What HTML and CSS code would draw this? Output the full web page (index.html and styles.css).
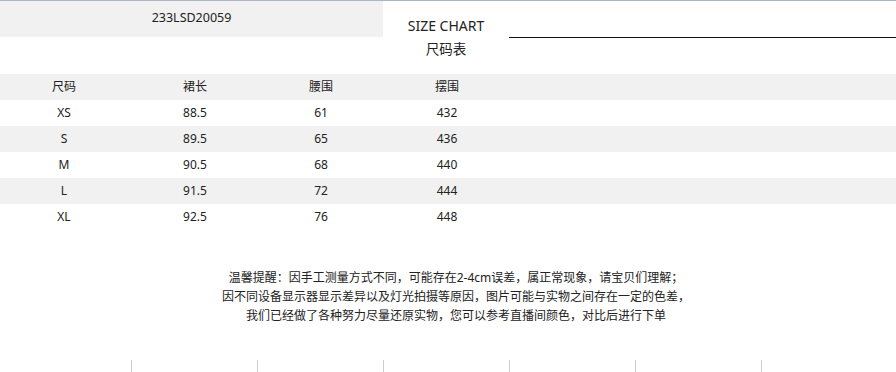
FILE: index.html
```html
<!DOCTYPE html>
<html lang="zh-CN">
<head>
<meta charset="utf-8">
<title>SIZE CHART 尺码表</title>
<link rel="stylesheet" href="styles.css">
</head>
<body>
<div class="top-rule"></div>
<header class="title-bar">
  <div class="code">233LSD20059</div>
  <div class="title">
    <div class="title-en">SIZE CHART</div>
    <div class="title-cn">尺码表</div>
  </div>
  <div class="rule"></div>
</header>
<section class="chart">
  <div class="row stripe"><span>尺码</span><span>裙长</span><span>腰围</span><span>摆围</span></div>
  <div class="row"><span>XS</span><span>88.5</span><span>61</span><span>432</span></div>
  <div class="row stripe"><span>S</span><span>89.5</span><span>65</span><span>436</span></div>
  <div class="row"><span>M</span><span>90.5</span><span>68</span><span>440</span></div>
  <div class="row stripe"><span>L</span><span>91.5</span><span>72</span><span>444</span></div>
  <div class="row"><span>XL</span><span>92.5</span><span>76</span><span>448</span></div>
</section>
<section class="notes">
  <p>温馨提醒：因手工测量方式不同，可能存在2-4cm误差，属正常现象，请宝贝们理解；</p>
  <p>因不同设备显示器显示差异以及灯光拍摄等原因，图片可能与实物之间存在一定的色差，</p>
  <p>我们已经做了各种努力尽量还原实物，您可以参考直播间颜色，对比后进行下单</p>
</section>
<div class="ticks"><i></i><i></i><i></i><i></i><i></i><i></i></div>
</body>
</html>
```
FILE: styles.css
```css
html, body {
  margin: 0;
  padding: 0;
  background: #ffffff;
}
body {
  width: 896px;
  height: 372px;
  overflow: hidden;
  font-family: "Noto Sans", "Noto Sans CJK SC", sans-serif;
  font-size: 12px;
  color: #222222;
}
.top-rule {
  height: 1px;
  background: #aab6c3;
}
.title-bar {
  display: grid;
  grid-template-columns: 383px 126px 1fr;
  height: 61px;
}
.code {
  height: 36px;
  background: #f1f1f1;
  text-align: center;
  line-height: 17px;
  padding-top: 8px;
  box-sizing: border-box;
  font-size: 12.5px;
}
.title {
  text-align: center;
  padding-top: 15px;
}
.title-en {
  font-size: 14px;
  line-height: 20px;
}
.title-cn {
  font-size: 13.5px;
  line-height: 24px;
  margin-top: 1px;
}
.rule {
  height: 36px;
  border-bottom: 1px solid #111111;
}
.chart {
  margin-top: 12px;
}
.row {
  display: grid;
  grid-template-columns: 128px 134px 118px 134px 1fr;
  height: 26px;
  line-height: 26px;
}
.row span {
  text-align: center;
}
.stripe {
  background: #f1f1f1;
}
.notes {
  margin-top: 38px;
  padding-left: 16px;
  text-align: center;
  font-size: 12px;
  line-height: 19px;
}
.notes p {
  margin: 0;
}
.ticks {
  display: flex;
  margin-top: 35px;
  padding-left: 131px;
  height: 12px;
}
.ticks i {
  width: 126px;
  height: 12px;
  border-left: 1px solid #cccccc;
  box-sizing: border-box;
}
```
